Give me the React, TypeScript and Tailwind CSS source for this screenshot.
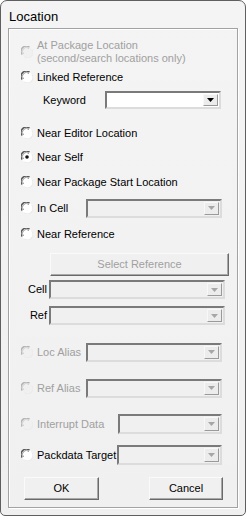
import React from 'react';

const font = { fontFamily: '"Liberation Sans", Arial, sans-serif' };

function Radio({ checked = false, disabled = false }: { checked?: boolean; disabled?: boolean }) {
  const dark = disabled ? '#b4b4b4' : '#5a5a5a';
  return (
    <svg width="12" height="12" viewBox="0 0 12 12" className="shrink-0">
      <circle cx="6" cy="6" r="5.5" fill={disabled ? '#f0f0f0' : '#ffffff'} />
      <path d="M1.2 8.5 A5.2 5.2 0 0 1 8.5 1.2" fill="none" stroke={dark} strokeWidth="1.5" />
      <path d="M2.6 8 A3.8 3.8 0 0 1 8 2.6" fill="none" stroke={disabled ? '#d0d0d0' : '#9a9a9a'} strokeWidth="1" />
      <path d="M10.8 3.5 A5.2 5.2 0 0 1 3.5 10.8" fill="none" stroke="#e8e8e8" strokeWidth="1" />
      {checked && <circle cx="6" cy="6" r="1.8" fill="#111" />}
    </svg>
  );
}

function Combo({ w, h = 19, enabled = false }: { w: number; h?: number; enabled?: boolean }) {
  return (
    <div
      className={`flex shrink-0 border-2 border-t-[#7a7a7a] border-l-[#7a7a7a] border-r-[#dcdcdc] border-b-[#dcdcdc] ${enabled ? 'bg-white' : 'bg-[#f0f0f0]'}`}
      style={{ width: w, height: h }}
    >
      <div className="flex-1" />
      <div className="my-[1px] mr-[1px] flex w-[15px] items-center justify-center border border-t-[#f8f8f8] border-l-[#f8f8f8] border-r-[#9a9a9a] border-b-[#9a9a9a] bg-[#ececec]">
        <svg width="7" height="4" viewBox="0 0 7 4">
          <path d="M0 0 H7 L3.5 4 Z" fill={enabled ? '#000' : '#a6a6a6'} />
        </svg>
      </div>
    </div>
  );
}

function Btn({ label, w, disabled = false }: { label: string; w: number; disabled?: boolean }) {
  return (
    <div
      className={`flex h-[23px] shrink-0 items-center justify-center border border-t-[#fafafa] border-l-[#fafafa] border-r-[#6a6a6a] border-b-[#6a6a6a] bg-[#f0f0f0] text-[11px] shadow-[inset_-1px_-1px_0_#a8a8a8] ${disabled ? 'text-[#a0a0a0]' : 'text-black'}`}
      style={{ width: w }}
    >
      {label}
    </div>
  );
}

function RadioRow({ label, checked, disabled, mt, lw, children }: { label: string; checked?: boolean; disabled?: boolean; mt: number; lw?: number; children?: React.ReactNode }) {
  return (
    <div className="flex h-[20px] items-center pl-[12px]" style={{ marginTop: mt }}>
      <Radio checked={checked} disabled={disabled} />
      <span
        className={`ml-[4px] shrink-0 whitespace-nowrap pt-[1px] text-[11px] leading-none ${disabled ? 'text-[#a0a0a0]' : 'text-black'}`}
        style={lw ? { width: lw } : undefined}
      >
        {label}
      </span>
      {children}
    </div>
  );
}

export default function App() {
  return (
    <div className="h-[517px] w-[247px] bg-white" style={font}>
      <div className="flex h-[516px] w-[246px] flex-col rounded-t-[7px] rounded-b-[5px] border border-[#5f5f5f] bg-gradient-to-b from-[#f4f4f4] to-[#f0f0f0]">
        <div className="flex h-[27px] items-end pb-[5px] pl-[8px] text-[13px] leading-none text-black">Location</div>
        <div className="mx-[7px] flex h-[480px] flex-col border border-[#a2a2a2] shadow-[inset_1px_1px_0_#ffffff,1px_1px_0_#ffffff]">
          <div className="mt-[9px] flex h-[27px] pl-[12px]">
            <div className="mt-[8px]"><Radio disabled /></div>
            <div className="ml-[4px] pt-[1px] text-[11px] leading-[13px] text-[#a0a0a0]">
              At Package Location<br />(second/search locations only)
            </div>
          </div>
          <RadioRow label="Linked Reference" mt={2} />
          <div className="mt-[3px] flex h-[20px] items-center">
            <span className="ml-[34px] w-[62px] pt-[1px] text-[11px] leading-none text-black">Keyword</span>
            <Combo w={116} h={18} enabled />
          </div>
          <RadioRow label="Near Editor Location" mt={13} />
          <RadioRow label="Near Self" checked mt={4} />
          <RadioRow label="Near Package Start Location" mt={5} />
          <RadioRow label="In Cell" mt={6} lw={49}>
            <Combo w={136} />
          </RadioRow>
          <RadioRow label="Near Reference" mt={6} />
          <div className="mt-[9px] flex pl-[41px]">
            <Btn label="Select Reference" w={179} disabled />
          </div>
          <div className="mt-[4px] flex h-[19px] items-center">
            <span className="w-[40px] pr-[2px] text-right text-[11px] leading-none text-black">Cell</span>
            <Combo w={176} />
          </div>
          <div className="mt-[7px] flex h-[19px] items-center">
            <span className="w-[40px] pr-[2px] text-right text-[11px] leading-none text-black">Ref</span>
            <Combo w={176} />
          </div>
          <RadioRow label="Loc Alias" disabled mt={17} lw={49}>
            <Combo w={136} />
          </RadioRow>
          <RadioRow label="Ref Alias" disabled mt={16} lw={49}>
            <Combo w={136} />
          </RadioRow>
          <RadioRow label="Interrupt Data" disabled mt={16} lw={81}>
            <Combo w={104} h={20} />
          </RadioRow>
          <RadioRow label="Packdata Target" mt={11} lw={80}>
            <Combo w={105} h={20} />
          </RadioRow>
          <div className="mt-[12px] flex justify-between pl-[15px] pr-[14px]">
            <Btn label="OK" w={75} />
            <Btn label="Cancel" w={74} />
          </div>
        </div>
      </div>
    </div>
  );
}
